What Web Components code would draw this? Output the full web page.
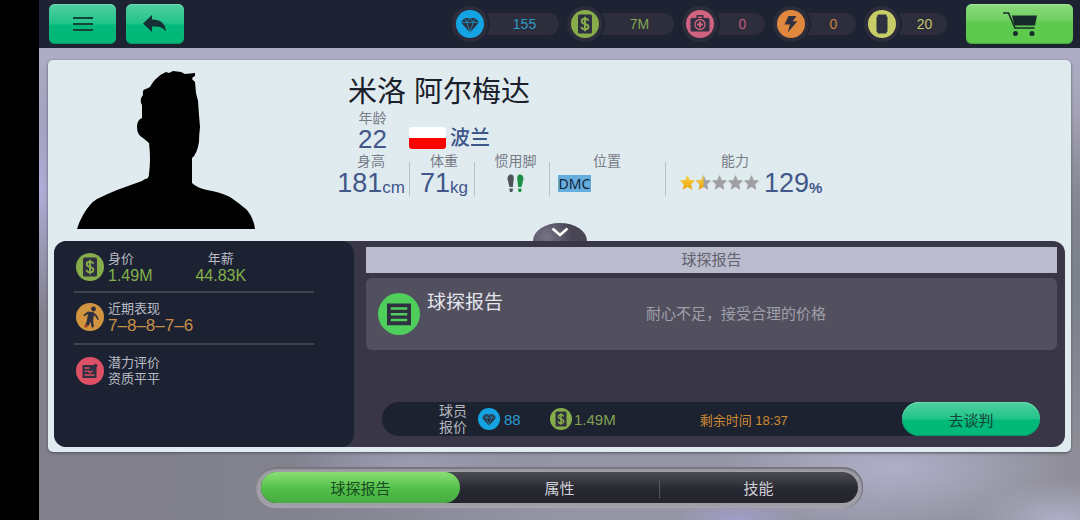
<!DOCTYPE html>
<html lang="zh-CN">
<head>
<meta charset="utf-8">
<meta name="viewport" content="width=device-width, initial-scale=1">
<title>球探报告</title>
<style>
html { height: 100%; }
body {
  margin: 0;
  min-height: 100%;
  display: flex;
  background: #000;
  font-family: "Liberation Sans", "Noto Sans CJK SC", sans-serif;
  font-size: 15px;
}
scout-app { flex: 1; }
</style>
</head>
<body>
<scout-app></scout-app>
<script>
const define = (name, html, setup) => {
  const template = document.createElement('template');
  template.innerHTML = html;
  customElements.define(name, class extends HTMLElement {
    constructor() {
      super();
      this.attachShadow({ mode: 'open' }).append(template.content.cloneNode(true));
    }
    connectedCallback() { if (setup) setup(this, this.shadowRoot); }
  });
};

/* Round icons: a coloured disc with a dark glyph, on a 28-unit grid */
const glyphs = {
  gem: ['#14a4e4', '<path d="M8.500 8h11l3.500 4.500L14 22.500 5 12.500z"/><path d="M5 12.500h18M8.500 8l2.200 4.500L14 8l3.300 4.500L19.500 8M10.700 12.500 14 22l3.300-9.500" fill="none" stroke="#14a4e4" stroke-width=".7"/>'],
  cash: ['#87ad4b', '<rect x="7" y="4.500" width="14" height="19" rx="1.500"/><path d="M17.300 10.800c-.4-1.500-1.600-2.100-3.300-2.100-2 0-3.300.9-3.300 2.500 0 3.700 6.700 1.900 6.700 5.600 0 1.600-1.400 2.600-3.400 2.600-1.900 0-3.200-.8-3.500-2.500M14 6.800v14.500" fill="none" stroke="#87ad4b" stroke-width="1.900"/>'],
  medkit: ['#cf6380', '<path d="M10.500 8V5h7v3H16V6.500h-4V8z"/><rect x="4.500" y="8" width="19" height="13.500" rx="1.500"/><circle cx="14" cy="14.500" r="5" fill="none" stroke="#cf6380" stroke-width="1.300"/><path d="M14 11.500v6M11 14.500h6" stroke="#cf6380" stroke-width="1.900"/>'],
  bolt: ['#e0883d', '<path d="M11.500 6h8l-3.800 5.300h4.700L10.700 22.500l2.300-8H7.500z"/>'],
  battery: ['#c9cd68', '<rect x="9.500" y="4.500" width="9" height="2.500"/><rect x="8.500" y="6.500" width="11" height="15.500" rx="1"/><rect x="9.500" y="21" width="9" height="2.500"/>'],
  player: ['#d1943f', '<circle cx="17.500" cy="6" r="2.400"/><path d="m12 8.500 5.500.7 3.500 3.300 2 3.700-1.300.8-2.400-3.700-1.400-.9-.8 4.800.8 7-2.300.3-1.200-6-1.700 4.300-3.700-.1 1.800-4.900 1.200-6.800-3.500 2.300-1.200-1.200z"/><circle cx="10" cy="23" r="1.700" fill="#a83a22"/>'],
  review: ['#dd5065', '<rect x="6.500" y="8" width="14" height="13"/><path d="M8.500 11h5M8.500 14.200h3M8.500 18h10M12 13.500l2 2.300 3.500-3.300" fill="none" stroke="#dd5065" stroke-width="1.300"/><path d="m15 11.500 4.500-5 2.300 2-4.500 5-2.700.6z"/>'],
  list: ['#4fce5c', '<rect x="6" y="7" width="16" height="14.500"/><path d="M8.500 10.300h11M8.500 14.200h11M8.500 18h11" stroke="#4fce5c" stroke-width="1.600"/>']
};

define('disc-icon', `<style>
:host { display: block; flex: none; width: var(--disc, 28px); height: var(--disc, 28px); }
svg { display: block; width: 100%; height: 100%; }
</style><svg viewBox="0 0 28 28" aria-hidden="true"></svg>`, (host, root) => {
  const [color, shape] = glyphs[host.getAttribute('name')];
  root.querySelector('svg').innerHTML = `<circle cx="14" cy="14" r="14" fill="${color}"/><g fill="#2f3140">${shape}</g>`;
});

define('game-button', `<style>
:host { display: block; height: 40px; }
button {
  display: flex; align-items: center; justify-content: center;
  width: 100%; height: 100%; padding: 0; border: 0;
  border-radius: var(--radius, 6px);
  background: linear-gradient(#50cf9f, #22c48b 48%, #03b97a 54%, #03b97a);
  box-shadow: inset 0 1px 1px #6edcb2, inset 0 -1px 1px #079461;
  color: #134336; font: inherit; cursor: pointer;
}
:host([tone="lime"]) button {
  background: linear-gradient(#8bdb7d, #6fd05f 40%, #5dca4e 48%, #5dca4e);
  box-shadow: inset 0 1px 1px #a0e494, inset 0 -1px 1px #43a43b;
}
</style><button type="button"><slot></slot></button>`, (host, root) => {
  if (host.hasAttribute('label')) root.querySelector('button').setAttribute('aria-label', host.getAttribute('label'));
});

define('resource-pill', `<style>
:host { display: flex; align-items: center; width: 83px; }
:host([wide]) { width: 107px; }
.ring { flex: none; padding: 4px; border-radius: 50%; background: #2c2c3a; z-index: 1; box-shadow: 0 0 0 2px #1d2333; }
.value {
  flex: 1; margin-left: -4px; padding-left: 6px; line-height: 22px;
  border-radius: 0 11px 11px 0; background: #2e2d3b; text-align: center; font-size: 14px;
}
</style><div class="ring"><slot name="icon"></slot></div><div class="value"><slot></slot></div>`);

define('top-bar', `<style>
:host { display: flex; align-items: center; height: 48px; padding: 0 7px 0 10px; background: #1d2333; }
nav { display: flex; gap: 10px; flex: 1; }
.menu { width: 67px; } .back { width: 58px; } .shop { width: 107px; }
.resources { display: flex; gap: 8px; margin-right: 19px; }
</style>
<nav>
  <game-button class="menu" label="菜单"><svg width="20" height="14" viewBox="0 0 20 14"><path d="M0 1h20M0 7h20M0 13h20" stroke="#14443a" stroke-width="2"/></svg></game-button>
  <game-button class="back" label="返回"><svg width="24" height="18" viewBox="0 0 24 18"><path d="M0 8.500 9 0v4.500c8 0 13.500 3.500 14 12-3.500-4.500-7-5.500-14-5V17z" fill="#173036"/></svg></game-button>
</nav>
<div class="resources">
  <resource-pill wide style="color:#2d9ccc"><disc-icon slot="icon" name="gem"></disc-icon>155</resource-pill>
  <resource-pill wide style="color:#85a653"><disc-icon slot="icon" name="cash"></disc-icon>7M</resource-pill>
  <resource-pill style="color:#c05f80"><disc-icon slot="icon" name="medkit"></disc-icon>0</resource-pill>
  <resource-pill style="color:#c98247"><disc-icon slot="icon" name="bolt"></disc-icon>0</resource-pill>
  <resource-pill style="color:#c3c66d"><disc-icon slot="icon" name="battery"></disc-icon>20</resource-pill>
</div>
<game-button class="shop" tone="lime" label="商店"><svg width="34" height="25" viewBox="0 0 34 25"><path d="M9 3.500h25l-2 10H11.500z" fill="#182a2b"/><path d="M0 1h5.500l6.500 15h19.500" fill="none" stroke="#182a2b" stroke-width="1.600"/><circle cx="12.500" cy="21.500" r="2.500" fill="#182a2b"/><circle cx="29" cy="21.500" r="2.500" fill="#182a2b"/></svg></game-button>`);

define('stat-cell', `<style>
:host { display: block; text-align: center; white-space: nowrap; }
.label { line-height: 18px; font-size: 14px; color: #777b86; }
.value { display: flex; align-items: center; justify-content: center; height: 26px; color: #41578a; font-size: 27px; line-height: 26px; }
:host([start]) .value { justify-content: flex-start; }
:host([compact]) .value { height: 24px; font-size: 26px; line-height: 24px; }
</style><div class="label"><slot name="label"></slot></div><div class="value"><slot></slot></div>`);

define('star-rating', `<style>
:host { display: block; } svg { display: block; }
</style><svg width="79" height="16" viewBox="0 0 79 16" role="img"></svg>`, (host, root) => {
  const value = Number(host.getAttribute('value'));
  const star = 'm7.500 0 2.300 5 5.400.6-4 3.700 1.100 5.400-4.800-2.700-4.800 2.700 1.100-5.400-4-3.700 5.400-.6z';
  let out = '<defs><linearGradient id="gold" x2="0" y2="1"><stop stop-color="#fbd23b"/><stop offset="1" stop-color="#eda414"/></linearGradient><clipPath id="half"><path d="M0 0h7.500v16H0z"/></clipPath></defs>';
  for (let i = 0; i < 5; i++) {
    const part = value - i;
    out += `<g transform="translate(${i * 16} 0)"><path d="${star}" fill="${part >= 1 ? 'url(#gold)' : '#a0a1a2'}"/>${part === .5 ? `<path d="${star}" fill="url(#gold)" clip-path="url(#half)"/>` : ''}</g>`;
  }
  const svg = root.querySelector('svg');
  svg.innerHTML = out;
  svg.setAttribute('aria-label', `${value} / 5`);
});

define('player-profile', `<style>
:host { display: flex; position: relative; height: 181px; }
.portrait { display: block; flex: none; width: 180px; height: 159px; margin: 11px 79px 0 23px; }
.info { flex: 1; }
h1 { margin: 14px 0 0 12px; font-size: 29px; line-height: 36px; font-weight: 400; color: #1a202b; }
.origin { display: flex; align-items: flex-end; height: 42px; }
.age { width: 73px; padding-bottom: 1px; }
.country { display: flex; align-items: center; gap: 4px; padding-bottom: 2px; font-size: 20px; line-height: 24px; font-weight: 500; color: #3d5688; }
.flag { width: 37px; height: 22px; border-radius: 3px; background: linear-gradient(#fff 50%, #f90500 50%); }
.stats { display: flex; }
.stats stat-cell { box-sizing: border-box; }
.stats stat-cell + stat-cell { background: linear-gradient(#b9c1c9, #b9c1c9) 0 100% / 1px 34px no-repeat; }
.height { width: 73px; } .weight { width: 65px; padding-left: 5px; } .foot { width: 75px; padding-left: 8px; } .role { width: 116px; } .ability { width: 174px; }
small { font-size: 17px; line-height: 16px; align-self: flex-end; }
.height { padding-right: 3px; }
.percent { font-size: 15px; font-weight: 700; }
mark { width: 33px; height: 17px; margin-left: 9px; background: #65addd; color: #10243a; font: 14px/17px "Noto Sans", sans-serif; text-align: center; }
.ability span { padding-right: 34px; }
star-rating { margin: 0 5px 0 15px; }
button { position: absolute; bottom: 0; left: 50%; width: 54px; height: 18px; padding: 0; border: 0; border-radius: 27px 27px 0 0 / 18px 18px 0 0; background: radial-gradient(circle at 25% 80%, #777487, #494555 60%); transform: translateX(-50%); cursor: pointer; }
button svg { display: block; margin: 0 auto; }
</style>
<svg class="portrait" viewBox="0 0 180 159" role="img" aria-label="球员头像"><path d="M0 158Q2 151 6 144Q13 132 20 128Q30 123 40 119L65 110 68 108Q72 108 72 103Q74 88 72 72L66 67Q60 64 60 56Q60 49 65 47L65 34Q62 29 66 24Q65 18 69 18L73 16Q77 9 80 7Q84 3 89 1L92 2 96 0 104 1 108 3 118 2 118 5 116 6 115 8 118 11 119 22 121 30 122 44 123 56Q122 64 122 71Q120 83 115 87V112Q120 117 130 119Q143 121 153 126Q162 132 170 139Q177 148 178 158z"/></svg>
<div class="info">
  <h1>米洛 阿尔梅达</h1>
  <div class="origin">
    <div class="age"><stat-cell compact><span slot="label">年龄</span>22</stat-cell></div>
    <div class="country"><span class="flag"></span>波兰</div>
  </div>
  <div class="stats">
    <stat-cell class="height"><span slot="label">身高</span>181<small>cm</small></stat-cell>
    <stat-cell class="weight"><span slot="label">体重</span>71<small>kg</small></stat-cell>
    <stat-cell class="foot"><span slot="label">惯用脚</span><svg width="17" height="19" viewBox="0 0 17 19" aria-label="双脚"><g fill="#4e525b"><path d="M.5 5C.5 1.500 2.500 0 4.500.500 7 1 7 4 6.500 7L5.800 13H2.500z"/><path d="M2.500 14.500h3.300v2a1.600 1.600 0 0 1-3.300 0z"/></g><g fill="#1f9145"><path d="M16.500 5c0-3.500-2-5-4-4.500C10 1 10 4 10.500 7l.7 6h3.300z"/><path d="M11.200 14.500h3.300v2a1.600 1.600 0 0 1-3.300 0z"/></g></svg></stat-cell>
    <stat-cell class="role" start><span slot="label">位置</span><mark>DMC</mark></stat-cell>
    <stat-cell class="ability" start><span slot="label">能力</span><star-rating value="1.5"></star-rating>129<small class="percent">%</small></stat-cell>
  </div>
</div>
<button type="button" aria-label="展开"><svg width="18" height="10" viewBox="0 0 18 10"><path d="m1.500 1.500 7.500 6.500 7.500-6.500" fill="none" stroke="#fff" stroke-width="2.500"/></svg></button>`);

define('info-row', `<style>
:host { display: flex; align-items: center; gap: 4px; }
.facts { display: flex; gap: 43px; }
</style><slot name="icon"></slot><div class="facts"><slot></slot></div>`);

define('player-facts', `<style>
:host { display: block; box-sizing: border-box; width: 300px; padding: 9px 40px 0 20px; border-radius: 13px; background: #1c2232; color: #b9bcc4; }
info-row { padding: 0 0 0 2px; height: 34px; }
info-row + info-row { margin-top: 7px; padding-top: 7px; padding-bottom: 2px; border-top: 2px solid #41444f; }
info-row:last-child { padding-top: 9px; }
.fact { font-size: 13px; line-height: 16px; }
.fact b { display: block; font-size: 16px; line-height: 17px; font-weight: 400; color: #82b04a; }
.fact .form { font-size: 17px; color: #c98e45; }
.fact + .fact { text-align: center; }
</style>
<info-row><disc-icon slot="icon" name="cash"></disc-icon><div class="fact">身价<b>1.49M</b></div><div class="fact">年薪<b>44.83K</b></div></info-row>
<info-row><disc-icon slot="icon" name="player"></disc-icon><div class="fact">近期表现<b class="form">7–8–8–7–6</b></div></info-row>
<info-row><disc-icon slot="icon" name="review"></disc-icon><div class="fact">潜力评价<br>资质平平</div></info-row>`);

define('offer-bar', `<style>
:host { display: flex; align-items: center; height: 34px; border-radius: 17px; background: #1c2230; }
.title { width: 30px; margin-left: 57px; font-size: 14px; line-height: 16px; color: #b4b7be; }
.price { display: flex; align-items: center; gap: 4px; --disc: 22px; font-size: 15px; }
.gems { width: 63px; margin-left: 9px; color: #2d9ccc; } .cash { margin-left: 9px; color: #82a152; gap: 2px; }
time { flex: 1; margin-left: 84px; font-size: 13px; color: #cf8a34; }
game-button { width: 138px; height: 34px; --radius: 17px; }
</style>
<div class="title">球员<br>报价</div>
<div class="price gems"><disc-icon name="gem"></disc-icon>88</div>
<div class="price cash"><disc-icon name="cash"></disc-icon>1.49M</div>
<time>剩余时间 18:37</time>
<game-button>去谈判</game-button>`);

define('scout-report', `<style>
:host { display: flex; flex-direction: column; padding: 6px 8px 11px 12px; }
h2 { margin: 0 0 5px; background: #babccd; color: #62616e; font-size: 15px; line-height: 26px; font-weight: 400; text-align: center; }
article { display: flex; align-items: center; height: 72px; padding: 0 12px; border-radius: 6px; background: #52505f; --disc: 42px; }
h3 { width: 193px; height: 46px; margin: 0 0 0 7px; font-size: 19px; line-height: 24px; font-weight: 400; color: #e4e6ec; }
p { margin: 0 0 0 26px; font-size: 15px; line-height: 20px; color: #a09fa9; }
offer-bar { margin: auto 17px 0 16px; }
</style>
<h2>球探报告</h2>
<article><disc-icon name="list"></disc-icon><h3>球探报告</h3><p>耐心不足，接受合理的价格</p></article>
<offer-bar></offer-bar>`);

define('player-card', `<style>
:host { display: block; padding: 0 6px 5px; border-radius: 5px; background: #e0ebf0; box-shadow: 0 1px 3px #505261; }
.panel { display: flex; height: 206px; border-radius: 12px; background: #393747; }
player-facts { flex: none; } scout-report { flex: 1; }
</style><player-profile></player-profile><div class="panel"><player-facts></player-facts><scout-report></scout-report></div>`);

define('section-tabs', `<style>
:host { display: block; width: 607px; max-width: 100%; box-sizing: border-box; padding: 5px; border-radius: 20px; background: #a09fa8; box-shadow: inset 0 2px 2px #737179, inset -1px 0 1px #737179, inset 0 -1px 1px #adacb5; }
div { display: flex; border-radius: 16px; background: linear-gradient(#4b4b54, #393942 30%, #282832 55%, #24242d); }
button { flex: 1; height: 31px; padding: 0; border: 0; background: none; color: #cfd1d7; font: inherit; cursor: pointer; }
button[aria-selected="true"] { border-radius: 16px; background: linear-gradient(#89de74, #66cb58 35%, #52be49 55%, #47ac43); color: #174d22; }
button:last-child { background: linear-gradient(#55555f, #55555f) 0 65% / 1px 18px no-repeat; }
</style><div role="tablist"><button type="button" role="tab" aria-selected="true">球探报告</button><button type="button" role="tab">属性</button><button type="button" role="tab">技能</button></div>`);

define('scout-app', `<style>
:host {
  display: flex; flex-direction: column; margin-left: 39px;
  background:
    radial-gradient(90px 130px at 0 36%, #b0aed8, transparent),
    radial-gradient(170px 60px at 82% 90%, #aeafc8, transparent),
    radial-gradient(120px 40px at 36% 90%, #9c9db4, transparent),
    radial-gradient(60px 20px at 67% 100%, #a09ec8, transparent),
    radial-gradient(90px 40px at 98% 100%, #b0afc8, transparent),
    radial-gradient(60px 170px at 100% 55%, #7a808a, transparent),
    linear-gradient(#aeacc4 0, #aeacc4 12%, transparent 40%),
    linear-gradient(90deg, #807f8b, #82838f 25%, #9594a4 50%, #9796a8 75%, #8f8e98);
}
player-card { margin: 12px 9px 15px; }
section-tabs { margin: 0 auto 12px; }
</style><top-bar></top-bar><player-card></player-card><section-tabs></section-tabs>`);
</script>
</body>
</html>
